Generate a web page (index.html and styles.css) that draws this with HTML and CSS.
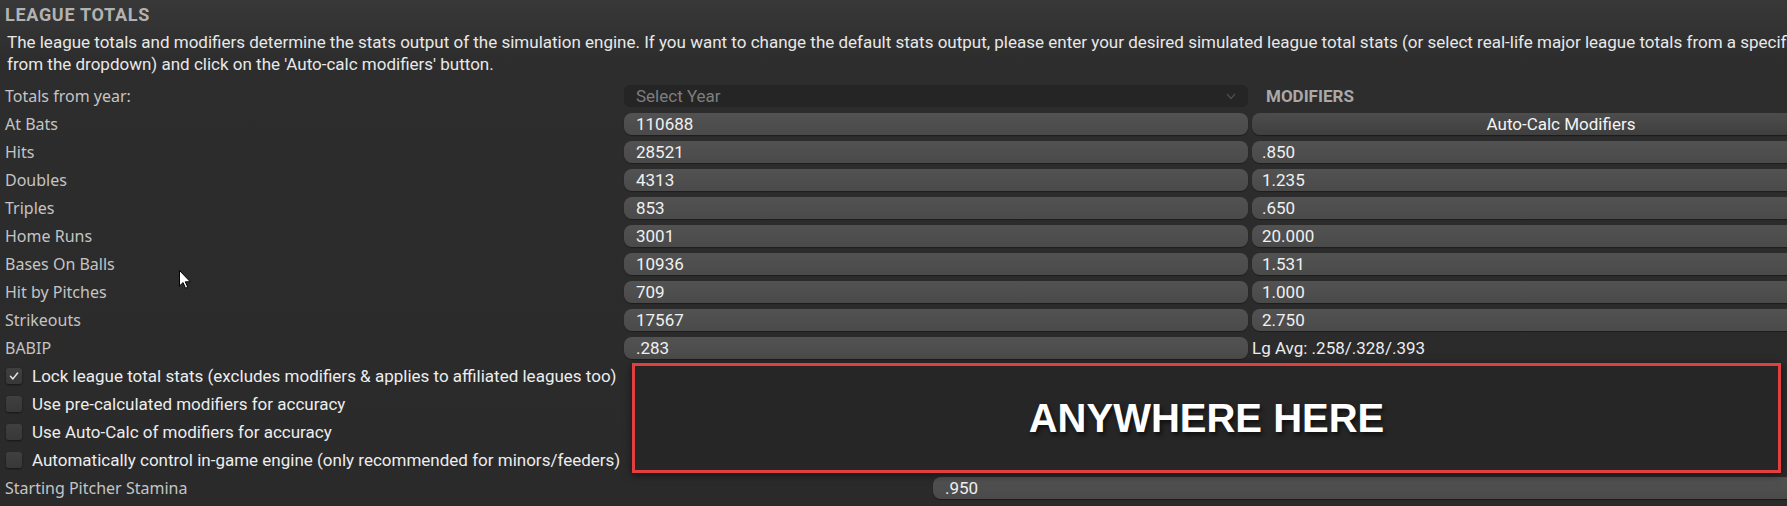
FILE: index.html
```html
<!DOCTYPE html>
<html lang="en">
<head>
<meta charset="utf-8">
<title>League Totals</title>
<link rel="stylesheet" href="styles.css">
</head>
<body>
<div class="page">
  <h1 class="title">LEAGUE TOTALS</h1>
  <p class="desc">The league totals and modifiers determine the stats output of the simulation engine. If you want to change the default stats output, please enter your desired simulated league total stats (or select real-life major league totals from a specific year<br>from the dropdown) and click on the 'Auto-calc modifiers' button.</p>

  <div class="grid">
    <div class="label">Totals from year:</div>
    <div class="select"><span>Select Year</span><svg class="chev" width="10" height="7" viewBox="0 0 10 7"><path d="M1 1l4 4.5L9 1" fill="none" stroke="#4e4e4e" stroke-width="1.2"/></svg></div>
    <div class="head">MODIFIERS</div>

    <div class="label">At Bats</div><div class="field">110688</div><div class="btn">Auto-Calc Modifiers</div>
    <div class="label">Hits</div><div class="field">28521</div><div class="field mod">.850</div>
    <div class="label">Doubles</div><div class="field">4313</div><div class="field mod">1.235</div>
    <div class="label">Triples</div><div class="field">853</div><div class="field mod">.650</div>
    <div class="label">Home Runs</div><div class="field">3001</div><div class="field mod">20.000</div>
    <div class="label">Bases On Balls</div><div class="field">10936</div><div class="field mod">1.531</div>
    <div class="label">Hit by Pitches</div><div class="field">709</div><div class="field mod">1.000</div>
    <div class="label">Strikeouts</div><div class="field">17567</div><div class="field mod">2.750</div>
    <div class="label">BABIP</div><div class="field">.283</div><div class="avg">Lg Avg: .258/.328/.393</div>
  </div>

  <div class="checks">
    <div class="check"><span class="box"><svg width="12" height="12" viewBox="0 0 12 12"><path d="M2.5 6.3l2.4 2.6L9.6 3" fill="none" stroke="#e8e8e8" stroke-width="1.5" stroke-linecap="round" stroke-linejoin="round"/></svg></span>Lock league total stats (excludes modifiers &amp; applies to affiliated leagues too)</div>
    <div class="check"><span class="box"></span>Use pre-calculated modifiers for accuracy</div>
    <div class="check"><span class="box"></span>Use Auto-Calc of modifiers for accuracy</div>
    <div class="check"><span class="box"></span>Automatically control in-game engine (only recommended for minors/feeders)</div>
  </div>

  <div class="stamina">
    <div class="label">Starting Pitcher Stamina</div>
    <div class="field">.950</div>
  </div>

  <div class="callout">ANYWHERE HERE</div>

  <svg class="cursor" width="12" height="19" viewBox="0 0 12 19"><path d="M0.5 0.5v15.5l3.6-3.4 2.4 5.6 2.2-1-2.4-5.4h5z" fill="#fff" stroke="#000" stroke-width="1"/></svg>
</div>
</body>
</html>
```

FILE: styles.css
```css
html, body {
  margin: 0;
  padding: 0;
  overflow: hidden;
}

body {
  background: #2b2b2b;
  font-family: Roboto, "Noto Sans", sans-serif;
  color: #e6e6e6;
}

.page {
  position: relative;
  width: 1870px;
  height: 506px;
  background: linear-gradient(#383838 0px, #2d2d2d 60px, #2a2a2a 100%);
}

.title {
  margin: 0;
  padding: 4px 0 0 5px;
  font-size: 18px;
  letter-spacing: 0.7px;
  line-height: 22px;
  font-weight: 700;
  color: #b2b2b2;
}

.desc {
  margin: 5px 0 0 0;
  padding-left: 7px;
  font-size: 17px;
  line-height: 22px;
  color: #e8e8e8;
  white-space: nowrap;
}

.grid {
  margin-top: 7px;
  display: grid;
  grid-template-columns: 615px 624px 618px;
  grid-auto-rows: 28px;
  column-gap: 4px;
  padding-left: 5px;
  align-items: center;
}

.label {
  font-family: "Noto Sans", "Open Sans", sans-serif;
  font-size: 16px;
  color: #c4c4c4;
}

.field {
  height: 22px;
  line-height: 22px;
  background: linear-gradient(#525252, #4a4a4a);
  border-radius: 8px;
  padding-left: 12px;
  font-size: 17px;
  color: #f0f0f0;
  box-shadow: 0 1px 1px rgba(0,0,0,0.35);
}

.field.mod {
  padding-left: 10px;
}

.select {
  height: 22px;
  background: #252525;
  border-radius: 6px;
  display: flex;
  align-items: center;
  justify-content: space-between;
  padding: 0 12px;
  font-size: 17px;
  color: #7e7e7e;
}

.head {
  padding-left: 14px;
  font-size: 17px;
  font-weight: 700;
  color: #a9a9a9;
}

.btn {
  height: 22px;
  line-height: 22px;
  background: linear-gradient(#4d4d4d, #3f3f3f);
  border-radius: 8px;
  text-align: center;
  font-size: 17px;
  color: #f4f4f4;
  box-shadow: 0 1px 1px rgba(0,0,0,0.4);
}

.avg {
  font-size: 17px;
  color: #ececec;
}

.checks {
  display: flex;
  flex-direction: column;
}

.check {
  height: 28px;
  display: flex;
  align-items: center;
  gap: 10px;
  padding-left: 6px;
  font-size: 17px;
  color: #ededed;
}

.box {
  width: 16px;
  height: 16px;
  border-radius: 3px;
  background: linear-gradient(#404040, #383838);
  box-shadow: 0 1px 2px rgba(0,0,0,0.5);
  display: flex;
  align-items: center;
  justify-content: center;
}

.stamina {
  display: grid;
  grid-template-columns: 928px 933px;
  height: 28px;
  align-items: center;
  padding-left: 5px;
}

.callout {
  position: absolute;
  left: 632px;
  top: 363px;
  width: 1143px;
  height: 104px;
  border: 3px solid #e2403f;
  background: #262626;
  box-shadow: 0 2px 8px rgba(0,0,0,0.55);
  display: flex;
  align-items: center;
  justify-content: center;
  font-family: "Liberation Sans", Arial, sans-serif;
  font-size: 40px;
  font-weight: 700;
  color: #ffffff;
  text-shadow: 2px 3px 4px rgba(0,0,0,0.6);
}

.cursor {
  position: absolute;
  left: 179px;
  top: 270px;
}
```
